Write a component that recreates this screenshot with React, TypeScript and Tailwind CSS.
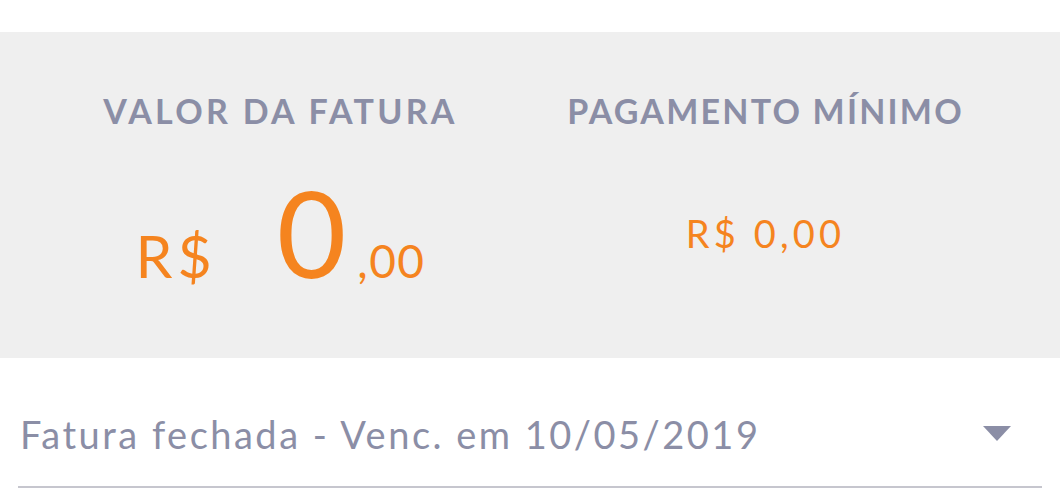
import React from 'react';

const FONT = { fontFamily: 'Lato, "Noto Sans", sans-serif' };

const InvoiceSummary: React.FC = () => {
  return (
    <div className="w-[1060px] h-[502px] bg-white overflow-hidden" style={FONT}>
      <div className="h-[32px]" />
      <div className="h-[326px] bg-[#efefef] grid grid-cols-2 pl-[38px] pr-[52px] pt-[62px]">
        <div className="flex flex-col items-center">
          <h2 className="text-[34px] leading-none font-bold tracking-[3.3px] text-[#8b8ea6] whitespace-nowrap">
            VALOR DA FATURA
          </h2>
          <div className="mt-[44px] flex items-baseline text-[#f5841f] leading-none">
            <span className="text-[59px] tracking-[5px]">R$</span>
            <span className="text-[120px] ml-[60px]">0</span>
            <span className="text-[46px] ml-[11px] tracking-[1.5px]">,00</span>
          </div>
        </div>
        <div className="flex flex-col items-center">
          <h2 className="text-[34px] leading-none font-bold tracking-[2.2px] text-[#8b8ea6] whitespace-nowrap">
            PAGAMENTO MÍNIMO
          </h2>
          <div className="mt-[86px] text-[38px] leading-none tracking-[4.2px] text-[#f5841f] whitespace-nowrap">
            R$ 0,00
          </div>
        </div>
      </div>
      <div className="mx-[18px] mt-[57px] flex items-start justify-between border-b-2 border-[#c6c6ce] pb-[33px]">
        <span className="text-[38px] leading-none tracking-[2.5px] text-[#8b8ea6] ml-[2px] whitespace-nowrap">
          Fatura fechada - Venc. em 10/05/2019
        </span>
        <svg width="28" height="15" viewBox="0 0 28 15" className="mt-[11px] mr-[31px]">
          <polygon points="0,0 28,0 14,15" fill="#8b8ea6" />
        </svg>
      </div>
    </div>
  );
};

export default function App() {
  return <InvoiceSummary />;
}
